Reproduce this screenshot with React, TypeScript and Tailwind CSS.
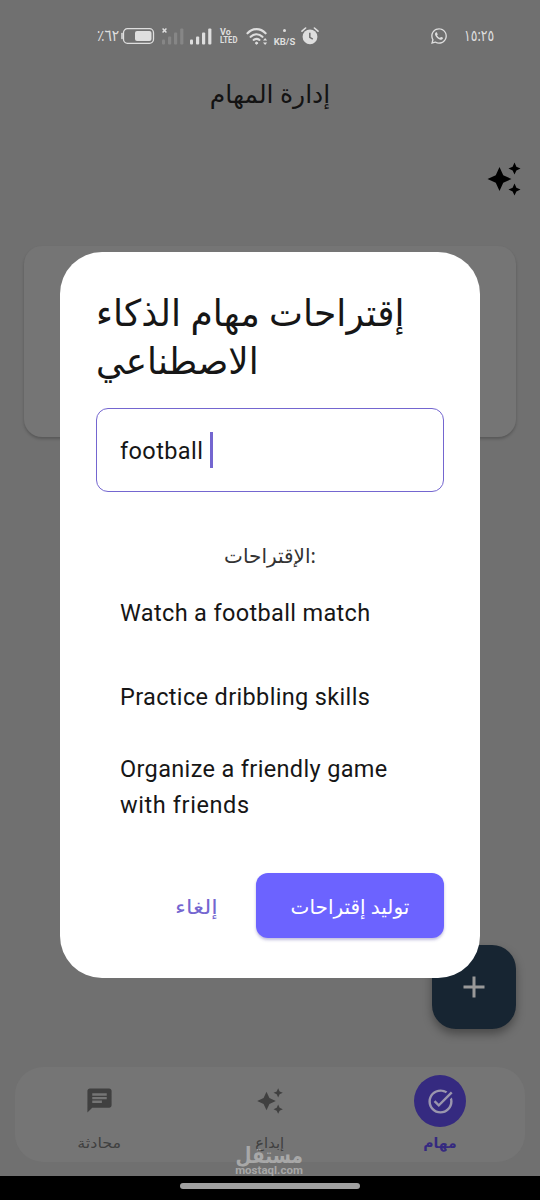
import {
    MdAdd,
    MdAutoAwesome,
    MdChat,
    MdTaskAlt,
} from "react-icons/md"
import { FaWhatsapp } from "react-icons/fa"

const suggestions = [
    { text: "Watch a football match", box: "h-[84px]" },
    { text: "Practice dribbling skills", box: "h-[72px]" },
]

const SignalBars = ({ className }: { className: string }) => (
    <svg viewBox="0 0 22 17" className={className} fill="currentColor">
        <rect x="0" y="11.5" width="3" height="5" rx="1" />
        <rect x="6" y="8.5" width="3.2" height="8" rx="1" />
        <rect x="12" y="4.5" width="3.2" height="12" rx="1" />
        <rect x="18.2" y="0.5" width="3.2" height="16" rx="1" />
    </svg>
)

const StatusBar = () => {
    return (
        <div className="flex h-[72px] items-center pl-[97px] text-[#dedede]">
            <div dir="ltr" className="w-[24px] pb-[3px] text-[16px] leading-4 whitespace-nowrap">
                <span className="inline-block origin-left scale-x-[0.86]">٪٦٢</span>
            </div>
            <svg viewBox="0 0 34 18" className="h-[18px] w-[34px]" fill="none">
                <rect x="2.5" y="1.7" width="30" height="14.6" rx="4" stroke="currentColor" strokeWidth="1.3" />
                <path d="M1 6.5v5" stroke="currentColor" strokeWidth="1.5" strokeLinecap="round" />
                <rect x="14" y="4" width="16.5" height="10" rx="2" fill="currentColor" />
            </svg>
            <div className="relative ml-[7px] w-[21px]">
                <SignalBars className="h-[17px] w-[22px] text-[#868686]" />
                <svg viewBox="0 0 6 6" className="absolute top-0 left-0 size-[5px]" stroke="currentColor" strokeWidth="1.8">
                    <path d="M.7.7l4.6 4.6M5.3.7L.7 5.3" />
                </svg>
            </div>
            <SignalBars className="ml-[7px] h-[17px] w-[22px]" />
            <div className="ml-2 w-[19px] font-['Roboto',sans-serif] text-[9px] leading-[8px] font-bold whitespace-nowrap">
                <div>Vo</div>
                <div className="origin-left scale-x-[0.86]">LTED</div>
            </div>
            <svg viewBox="0 0 24 20" className="ml-[7px] h-[19px] w-[23px]" fill="none" stroke="currentColor" strokeWidth="2.3" strokeLinecap="round">
                <path d="M1.5 6.6C7 .8 15 .8 20.5 6.6M4.8 10.3c3.8-3.6 8.6-3.6 12.4 0M8 13.6c1.9-1.5 4.1-1.5 6 0" />
                <circle cx="11" cy="17" r="1.1" fill="currentColor" strokeWidth="1" />
                <path d="M17.8 14.3l2.2-2.8 2.2 2.8zM17.8 16.3h4.4L20 19z" fill="currentColor" stroke="none" />
            </svg>
            <div className="ml-1 flex w-[23px] flex-col items-center pt-[2px]">
                <span className="size-[3px] rounded-full bg-[#dedede]" />
                <span className="mt-[5px] font-['Roboto',sans-serif] text-[9.5px] leading-[9px] font-bold whitespace-nowrap">KB/S</span>
            </div>
            <svg viewBox="0 0 18 18" className="ml-[5px] size-[18px]" fill="none">
                <circle cx="9" cy="9.8" r="7.4" fill="currentColor" />
                <path d="M1 4.2L4.6 1M17 4.2L13.4 1" stroke="currentColor" strokeWidth="1.6" strokeLinecap="round" />
                <path d="M8.8 5.8v4.6l3 1.8" stroke="#707070" strokeWidth="1.5" />
            </svg>
            <FaWhatsapp className="ml-[111px] size-[18px]" />
            <div className="ml-4 pb-[3px] text-[16px] leading-4 whitespace-nowrap">
                <span className="inline-block origin-left scale-x-[0.78]">١٥:٢٥</span>
            </div>
        </div>
    )
}

const BottomNav = () => {
    return (
        <nav className="mx-[15px] flex h-[95px] rounded-[28px] bg-[#757575] pt-2 text-[#404040]">
            <div className="flex w-[169px] flex-col items-center">
                <div className="flex h-[51px] items-center">
                    <MdChat className="size-[29px]" />
                </div>
                <span className="mt-[7px] scale-x-[1.14] text-[14px] leading-5 whitespace-nowrap">محادثة</span>
            </div>
            <div className="flex w-[171px] flex-col items-center">
                <div className="flex h-[52px] items-center">
                    <MdAutoAwesome className="size-[28px]" />
                </div>
                <span className="mt-[6px] scale-x-105 text-[14px] leading-5 whitespace-nowrap">إبداع</span>
            </div>
            <div className="flex w-[170px] flex-col items-center text-[#352a80]">
                <div className="flex size-[52px] items-center justify-center rounded-full bg-[#352a80] text-[#9a96ad]">
                    <MdTaskAlt className="size-[29px]" />
                </div>
                <span className="mt-[6px] text-[14px] leading-5 font-bold whitespace-nowrap">مهام</span>
            </div>
        </nav>
    )
}

const SuggestionsDialog = () => {
    return (
        <div className="absolute top-[252px] left-[60px] flex h-[726px] w-[420px] flex-col rounded-[42px] bg-white px-9 pt-[36px] text-[#161616]">
            <h2 className="h-[96px] text-[37px] leading-[48px] whitespace-nowrap">
                <span className="block w-max origin-left scale-x-[0.975]">إقتراحات مهام الذكاء</span>
                <span className="block w-max origin-left scale-x-[0.965]">الاصطناعي</span>
            </h2>

            <div className="mt-[24px] flex h-[84px] items-center rounded-xl border-[1.5px] border-[#7466d0] pl-[23px]">
                <span className="pt-[3px] font-['Roboto',sans-serif] text-[23.5px] tracking-[0.4px]">football</span>
                <span className="ml-[7px] h-9 w-[3px] bg-[#7466d0]" />
            </div>

            <p className="mt-[50px] h-7 text-center text-xl leading-7 whitespace-nowrap text-[#333333]">
                <span className="inline-block">الإقتراحات:</span>
            </p>

            <ul className="mt-[25px] pl-6 font-['Roboto',sans-serif] text-[23.5px] leading-9 tracking-[0.35px]">
                {suggestions.map((item) => (
                    <li key={item.text} className={item.box}>
                        {item.text}
                    </li>
                ))}
                <li>
                    Organize a friendly game
                    <br />
                    <span className="tracking-[0.6px]">with friends</span>
                </li>
            </ul>

            <div className="mt-[50px] flex h-[65px] justify-end gap-[38px] leading-8">
                <button className="pt-[2px] text-xl text-[#7466d0]">
                    <span className="inline-block origin-right scale-x-[1.16]">إلغاء</span>
                </button>
                <button className="w-[188px] rounded-xl bg-[#6c63ff] pt-[2px] text-xl whitespace-nowrap text-white shadow-[0_2px_3px_rgba(80,70,160,0.35)]">
                    <span className="inline-block">توليد إقتراحات</span>
                </button>
            </div>
        </div>
    )
}

const App = () => {
    return (
        <main className="relative flex h-[1200px] w-[540px] flex-col overflow-hidden bg-[#707070] font-['Noto_Sans','DejaVu_Sans',sans-serif]">
            <StatusBar />
            <h1 className="h-[46px] text-center text-[25px] leading-[42px] font-medium text-[#131313]">إدارة المهام</h1>
            <div className="mt-[43px] flex justify-end pr-[18px]">
                <MdAutoAwesome className="size-9 text-black" />
            </div>
            <div className="mx-6 mt-[49px] h-[191px] rounded-[18px] bg-[#757575] shadow-[0_2px_3px_rgba(0,0,0,0.22)]" />

            <div className="mt-[508px] flex justify-end pr-6">
                <div className="flex size-[84px] items-center justify-center rounded-3xl bg-[#172532] text-[#999999] shadow-[0_5px_10px_rgba(0,0,0,0.35)]">
                    <MdAdd className="size-9" />
                </div>
            </div>

            <div className="mt-[38px]">
                <BottomNav />
            </div>

            <div className="mt-auto flex h-6 justify-center bg-black pt-[7px]">
                <div className="h-[6px] w-[180px] rounded-full bg-[#a0a0a0]" />
            </div>

            <SuggestionsDialog />

            <div className="absolute top-[1144px] left-[234px] flex w-[70px] flex-col items-center text-[#a8a8a8]">
                <span className="scale-x-[0.84] text-[22px] leading-[20px] font-bold whitespace-nowrap">مستقل</span>
                <span className="font-['Roboto',sans-serif] text-[11.5px] leading-[12px] font-bold whitespace-nowrap">mostaql.com</span>
            </div>
        </main>
    )
}

export default App
